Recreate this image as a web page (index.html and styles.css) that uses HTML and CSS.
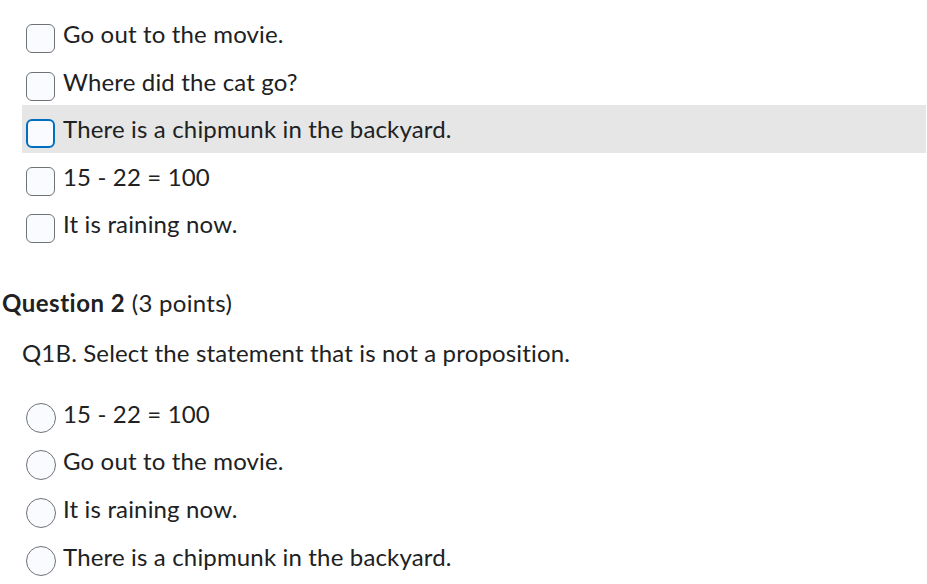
FILE: index.html
```html
<!DOCTYPE html>
<html lang="en">
<head>
<meta charset="utf-8">
<title>Quiz</title>
<link rel="stylesheet" href="styles.css">
</head>
<body>
<div class="page">
  <ul class="choices">
    <li class="choice"><span class="box"></span><span class="label">Go out to the movie.</span></li>
    <li class="choice"><span class="box"></span><span class="label">Where did the cat go?</span></li>
    <li class="choice hover"><span class="box focus"></span><span class="label">There is a chipmunk in the backyard.</span></li>
    <li class="choice"><span class="box"></span><span class="label">15 - 22 = 100</span></li>
    <li class="choice"><span class="box"></span><span class="label">It is raining now.</span></li>
  </ul>

  <h2 class="qhead"><strong>Question 2</strong> (3 points)</h2>
  <p class="prompt">Q1B. Select the statement that is not a proposition.</p>

  <ul class="choices radios">
    <li class="choice"><span class="radio"></span><span class="label">15 - 22 = 100</span></li>
    <li class="choice"><span class="radio"></span><span class="label">Go out to the movie.</span></li>
    <li class="choice"><span class="radio"></span><span class="label">It is raining now.</span></li>
    <li class="choice"><span class="radio"></span><span class="label">There is a chipmunk in the backyard.</span></li>
  </ul>
</div>
</body>
</html>
```
FILE: styles.css
```css
html, body {
  margin: 0;
  padding: 0;
  background: #ffffff;
}
body {
  font-family: Lato, "Noto Sans", sans-serif;
  color: #202122;
  font-size: 24px;
  letter-spacing: 0.16px;
  font-variant-ligatures: none;
}
.page {
  padding-top: 10px;
  padding-right: 1px;
}
.choices {
  list-style: none;
  margin: 0 0 0 22px;
  padding: 0;
}
.choice {
  display: flex;
  align-items: flex-start;
  height: 47.5px;
  padding-left: 4px;
  box-sizing: border-box;
}
.choice.hover {
  background: #e6e6e6;
}
.label {
  line-height: 47px;
  margin-left: 8px;
  white-space: nowrap;
}
.box {
  flex: none;
  width: 29px;
  height: 29px;
  margin-top: 14px;
  box-sizing: border-box;
  border: 1px solid #6e7376;
  border-radius: 6px;
  background: #f9fbff;
}
.box.focus {
  border: 2px solid #006fbf;
}
.qhead {
  margin: 40px 0 0 2px;
  font-size: 24px;
  font-weight: 400;
  line-height: 30px;
  letter-spacing: 0.3px;
}
.qhead strong {
  font-weight: 700;
  letter-spacing: 0.5px;
}
.prompt {
  margin: 20px 0 0 22px;
  line-height: 30px;
}
.radios {
  margin-top: 22px;
}
.radios .choice {
  height: 47.8px;
}
.radios .label {
  margin-left: 7px;
}
.radio {
  flex: none;
  width: 30px;
  height: 30px;
  margin-top: 13px;
  box-sizing: border-box;
  border: 1px solid #6e7376;
  border-radius: 50%;
  background: #f9fbff;
}
```
